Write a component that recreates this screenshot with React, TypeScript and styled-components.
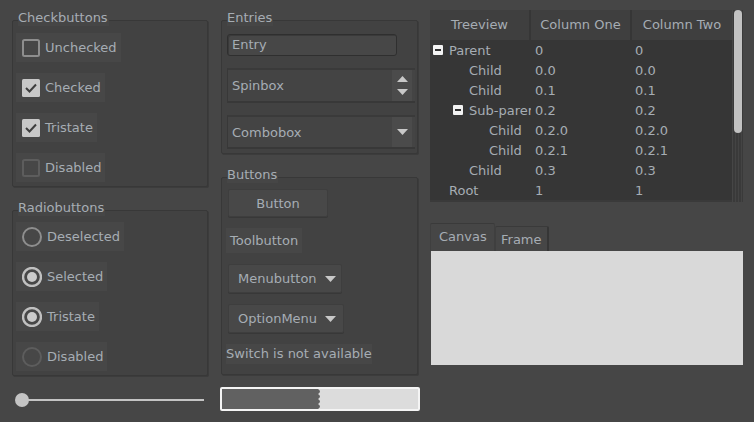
import React from "react";
import styled, { createGlobalStyle } from "styled-components";

const colors = {
  window: "#464646",
  frame: "#424242",
  frameBorder: "#383838",
  item: "#474747",
  text: "#a6adb4",
  light: "#c6c6c6",
  dark: "#2f2f2f",
  tree: "#363636",
  heading: "#3f3f3f",
};

const GlobalStyle = createGlobalStyle`
  html, body {
    margin: 0;
    background: ${colors.window};
  }
  body {
    font-family: "DejaVu Sans", "Liberation Sans", sans-serif;
    font-size: 13px;
    color: ${colors.text};
  }
`;

const Page = styled.div`
  display: flex;
  align-items: flex-start;
  padding: 10px 0 0 12px;
  width: 754px;
  height: 422px;
  box-sizing: border-box;
`;

const Column = styled.div<{ width: number; gapLeft?: number }>`
  display: flex;
  flex-direction: column;
  width: ${(p) => p.width}px;
  margin-left: ${(p) => p.gapLeft ?? 0}px;
`;

const GroupTitle = styled.div<{ top?: number }>`
  position: relative;
  z-index: 1;
  align-self: flex-start;
  height: 16px;
  line-height: 16px;
  margin: ${(p) => p.top ?? 0}px 0 -6px 6px;
  padding: 0 1px 0 0;
  background: ${colors.window};
`;

const Frame = styled.div<{ padTop: number; padBottom: number; gap: number }>`
  display: flex;
  flex-direction: column;
  align-items: flex-start;
  gap: ${(p) => p.gap}px;
  padding: ${(p) => p.padTop}px 2px ${(p) => p.padBottom}px 3px;
  background: ${colors.frame};
  border: 1px solid ${colors.frameBorder};
  border-radius: 2px;
  box-shadow: 1px 1px 0 #3c3c3c;
`;

/* check + radio */

const Choice = styled.div`
  display: flex;
  align-items: center;
  gap: 5px;
  height: 29px;
  padding: 0 4px 0 6px;
  background: ${colors.item};
`;

const CheckBox: React.FC<{ checked?: boolean; disabled?: boolean }> = ({
  checked,
  disabled,
}) => (
  <svg width="18" height="18" viewBox="0 0 18 18">
    {checked ? (
      <>
        <rect x="0" y="0" width="18" height="18" rx="1.5" fill="#c8c8c8" />
        <polyline
          points="4,9 7.5,12.5 14,5.5"
          fill="none"
          stroke="#3e3e3e"
          strokeWidth="2"
        />
      </>
    ) : (
      <rect
        x="1"
        y="1"
        width="16"
        height="16"
        rx="1.5"
        fill="none"
        stroke={disabled ? "#5d5d5d" : "#8e8e8e"}
        strokeWidth="2"
      />
    )}
  </svg>
);

const Radio: React.FC<{ selected?: boolean; disabled?: boolean }> = ({
  selected,
  disabled,
}) => (
  <svg width="20" height="20" viewBox="0 0 20 20">
    <circle
      cx="10"
      cy="10"
      r="9"
      fill="none"
      stroke={disabled ? "#5d5d5d" : selected ? "#c0c0c0" : "#8e8e8e"}
      strokeWidth={selected ? 2.4 : 2}
    />
    {selected && <circle cx="10" cy="10" r="5" fill="#cacaca" />}
  </svg>
);

/* slider */

const Slider = styled.div`
  display: flex;
  align-items: center;
  margin: 17px 0 0 3px;
  height: 14px;
  width: 189px;
`;

const Knob = styled.div`
  width: 14px;
  height: 14px;
  border-radius: 50%;
  background: #c4c4c4;
  flex: none;
`;

const Track = styled.div`
  flex: 1;
  height: 2px;
  margin-left: -7px;
  background: #c4c4c4;
`;

/* entries */

const Entry = styled.div`
  box-sizing: border-box;
  width: 170px;
  height: 22px;
  margin-left: 2px;
  padding-left: 4px;
  line-height: 20px;
  border: 1px solid ${colors.dark};
  border-radius: 3px;
  background: #474747;
  box-shadow: inset 1px 1px 0 #3a3a3a;
`;

const FieldBox = styled.div<{ height: number }>`
  box-sizing: border-box;
  display: flex;
  align-items: stretch;
  width: 188px;
  height: ${(p) => p.height}px;
  margin-left: 2px;
  border-top: 2px solid #3a3a3a;
  border-left: 1px solid #383838;
  border-bottom: 2px solid #383838;
  background: #444444;
`;

const FieldText = styled.div`
  flex: 1;
  display: flex;
  align-items: center;
  padding-left: 4px;
`;

const ArrowArea = styled.div<{ spread?: number }>`
  display: flex;
  flex-direction: column;
  justify-content: center;
  align-items: center;
  gap: ${(p) => p.spread ?? 0}px;
  width: 20px;
  margin-right: 3px;
  background: #4b4b4b;
`;

const Triangle: React.FC<{ up?: boolean }> = ({ up }) => (
  <svg width="11" height="6" viewBox="0 0 11 6">
    <polygon
      points={up ? "0,6 11,6 5.5,0" : "0,0 11,0 5.5,6"}
      fill="#c8c8c8"
    />
  </svg>
);

/* buttons */

const PushButton = styled.div<{ width: number; height?: number; menu?: boolean }>`
  box-sizing: border-box;
  display: flex;
  align-items: center;
  justify-content: ${(p) => (p.menu ? "flex-start" : "center")};
  gap: 8px;
  width: ${(p) => p.width}px;
  height: ${(p) => p.height ?? 29}px;
  margin-left: 3px;
  padding-left: ${(p) => (p.menu ? 9 : 0)}px;
  background: #484848;
  border: 1px solid #3e3e3e;
  border-radius: 2px;
  box-shadow: 0 1px 0 #383838;
`;

const ToolButton = styled.div`
  display: flex;
  align-items: center;
  height: 25px;
  padding: 0 4px;
  margin-left: 1px;
  background: #474747;
`;

const NoteLabel = styled.div`
  height: 20px;
  line-height: 20px;
  margin-left: 1px;
  background: #474747;
`;

const Progress = styled.div`
  box-sizing: border-box;
  display: flex;
  width: 200px;
  height: 24px;
  margin: 12px 0 0 -1px;
  border: 2px solid #f4f4f4;
  border-radius: 2px;
  background: #dcdcdc;
`;

/* treeview */

const TreeWrap = styled.div`
  display: flex;
  height: 192px;
`;

const Tree = styled.div`
  width: 302px;
  background: ${colors.tree};
  border-bottom: 2px solid #3a3a3a;
  overflow: hidden;
`;

const TreeGrid = styled.div`
  display: grid;
  grid-template-columns: 101px 101px 100px;
`;

const Heading = styled.div<{ last?: boolean }>`
  height: 30px;
  line-height: 30px;
  text-align: center;
  background: ${colors.heading};
  border-right: ${(p) => (p.last ? "none" : `2px solid ${colors.tree}`)};
`;

const Cell = styled.div<{ indent?: number }>`
  display: flex;
  align-items: center;
  height: 20px;
  padding-left: ${(p) => p.indent ?? 4}px;
  white-space: nowrap;
  overflow: hidden;
`;

const Expander = styled.span`
  display: inline-flex;
  align-items: center;
  justify-content: center;
  flex: none;
  width: 10px;
  height: 10px;
  margin-right: 6px;
  border-radius: 1px;
  background: #f2f2f2;

  &::after {
    content: "";
    width: 6px;
    height: 2px;
    background: #303030;
  }
`;

const Scrollbar = styled.div`
  width: 10px;
  margin-left: 1px;
  padding: 0 1px;
  box-sizing: border-box;
  background: repeating-linear-gradient(
    90deg,
    #3a3a3a 0 2px,
    #444444 2px 3px
  );
`;

const Thumb = styled.div`
  height: 123px;
  border-radius: 4px;
  background: #c2c2c2;
`;

/* notebook */

const Tabs = styled.div`
  display: flex;
  align-items: flex-end;
  height: 28px;
  margin-top: 21px;
`;

const Tab = styled.div<{ selected?: boolean }>`
  display: flex;
  align-items: center;
  height: ${(p) => (p.selected ? 28 : 25)}px;
  padding: 0 ${(p) => (p.selected ? 8 : 5)}px;
  box-sizing: border-box;
  width: ${(p) => (p.selected ? 65 : 54)}px;
  border-top: 1px solid #3a3a3a;
  border-left: 1px solid #3f3f3f;
  border-right: ${(p) => (p.selected ? "1px solid #3f3f3f" : "2px solid #363636")};
  border-radius: 2px 2px 0 0;
  padding-bottom: ${(p) => (p.selected ? 3 : 0)}px;
`;

const Pane = styled.div`
  width: 312px;
  height: 114px;
  margin-left: 1px;
  background: #d9d9d9;
`;

type Row = {
  name: string;
  a: string;
  level: number;
  open?: boolean;
};

const rows: Row[] = [
  { name: "Parent", a: "0", level: 0, open: true },
  { name: "Child", a: "0.0", level: 1 },
  { name: "Child", a: "0.1", level: 1 },
  { name: "Sub-parent", a: "0.2", level: 1, open: true },
  { name: "Child", a: "0.2.0", level: 2 },
  { name: "Child", a: "0.2.1", level: 2 },
  { name: "Child", a: "0.3", level: 1 },
  { name: "Root", a: "1", level: 0 },
];

const ProgressFill: React.FC = () => (
  <svg width="100" height="20" viewBox="0 0 100 20">
    <path
      d="M0 0 H96 Q100 2.5 96 5 Q100 7.5 96 10 Q100 12.5 96 15 Q100 17.5 96 20 H0 Z"
      fill="#616161"
    />
  </svg>
);

export default function App() {
  return (
    <Page>
      <GlobalStyle />
      <Column width={196}>
        <GroupTitle>Checkbuttons</GroupTitle>
        <Frame padTop={12} padBottom={4} gap={11}>
          <Choice>
            <CheckBox />
            Unchecked
          </Choice>
          <Choice>
            <CheckBox checked />
            Checked
          </Choice>
          <Choice>
            <CheckBox checked />
            Tristate
          </Choice>
          <Choice>
            <CheckBox disabled />
            Disabled
          </Choice>
        </Frame>
        <GroupTitle top={13}>Radiobuttons</GroupTitle>
        <Frame padTop={11} padBottom={4} gap={11}>
          <Choice>
            <Radio />
            Deselected
          </Choice>
          <Choice>
            <Radio selected />
            Selected
          </Choice>
          <Choice>
            <Radio selected />
            Tristate
          </Choice>
          <Choice>
            <Radio disabled />
            Disabled
          </Choice>
        </Frame>
        <Slider>
          <Knob />
          <Track />
        </Slider>
      </Column>

      <Column width={197} gapLeft={13}>
        <GroupTitle>Entries</GroupTitle>
        <Frame padTop={13} padBottom={4} gap={12}>
          <Entry>Entry</Entry>
          <FieldBox height={35}>
            <FieldText>Spinbox</FieldText>
            <ArrowArea spread={7}>
              <Triangle up />
              <Triangle />
            </ArrowArea>
          </FieldBox>
          <FieldBox height={34}>
            <FieldText>Combobox</FieldText>
            <ArrowArea>
              <Triangle />
            </ArrowArea>
          </FieldBox>
        </Frame>
        <GroupTitle top={13}>Buttons</GroupTitle>
        <Frame padTop={11} padBottom={10} gap={11}>
          <PushButton width={100} height={28}>
            Button
          </PushButton>
          <ToolButton>Toolbutton</ToolButton>
          <PushButton width={114} menu>
            Menubutton
            <Triangle />
          </PushButton>
          <PushButton width={116} menu>
            OptionMenu
            <Triangle />
          </PushButton>
          <NoteLabel>Switch is not available</NoteLabel>
        </Frame>
        <Progress>
          <ProgressFill />
        </Progress>
      </Column>

      <Column width={313} gapLeft={12}>
        <TreeWrap>
          <Tree>
            <TreeGrid>
              <Heading>Treeview</Heading>
              <Heading>Column One</Heading>
              <Heading last>Column Two</Heading>
              {rows.map((r, i) => (
                <React.Fragment key={i}>
                  <Cell indent={3 + r.level * 20 + (r.open ? 0 : 16)}>
                    {r.open && <Expander />}
                    {r.name}
                  </Cell>
                  <Cell>{r.a}</Cell>
                  <Cell indent={3}>{r.a}</Cell>
                </React.Fragment>
              ))}
            </TreeGrid>
          </Tree>
          <Scrollbar>
            <Thumb />
          </Scrollbar>
        </TreeWrap>
        <Tabs>
          <Tab selected>Canvas</Tab>
          <Tab>Frame</Tab>
        </Tabs>
        <Pane />
      </Column>
    </Page>
  );
}
